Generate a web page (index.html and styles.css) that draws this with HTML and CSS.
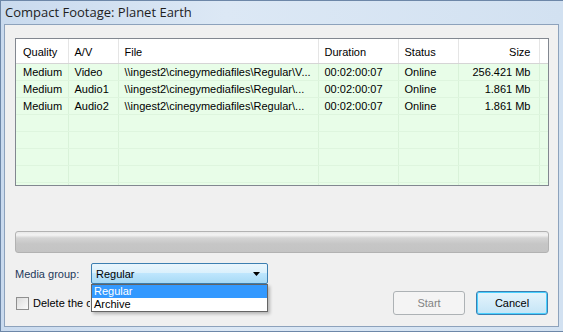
FILE: index.html
```html
<!DOCTYPE html>
<html lang="en">
<head>
  <meta charset="UTF-8">
  <title>Compact Footage: Planet Earth</title>
  <link rel="stylesheet" href="styles.css">
</head>
<body>

  <div class="window">
    <div class="titlebar">Compact Footage: Planet Earth</div>

    <div class="client">
      <div class="list">
        <table>
          <colgroup>
            <col style="width: 52px">
            <col style="width: 50px">
            <col style="width: 200px">
            <col style="width: 80px">
            <col style="width: 60px">
            <col style="width: 81px">
            <col>
          </colgroup>
          <thead>
            <tr>
              <th>Quality</th>
              <th>A/V</th>
              <th>File</th>
              <th>Duration</th>
              <th>Status</th>
              <th class="num">Size</th>
              <th class="filler"></th>
            </tr>
          </thead>
          <tbody>
            <tr>
              <td>Medium</td>
              <td>Video</td>
              <td>\\ingest2\cinegymediafiles\Regular\V...</td>
              <td>00:02:00:07</td>
              <td>Online</td>
              <td class="num">256.421 Mb</td>
              <td class="filler"></td>
            </tr>
            <tr>
              <td>Medium</td>
              <td>Audio1</td>
              <td>\\ingest2\cinegymediafiles\Regular\...</td>
              <td>00:02:00:07</td>
              <td>Online</td>
              <td class="num">1.861 Mb</td>
              <td class="filler"></td>
            </tr>
            <tr>
              <td>Medium</td>
              <td>Audio2</td>
              <td>\\ingest2\cinegymediafiles\Regular\...</td>
              <td>00:02:00:07</td>
              <td>Online</td>
              <td class="num">1.861 Mb</td>
              <td class="filler"></td>
            </tr>
            <tr><td></td><td></td><td></td><td></td><td></td><td></td><td class="filler"></td></tr>
            <tr><td></td><td></td><td></td><td></td><td></td><td></td><td class="filler"></td></tr>
            <tr><td></td><td></td><td></td><td></td><td></td><td></td><td class="filler"></td></tr>
            <tr><td></td><td></td><td></td><td></td><td></td><td></td><td class="filler"></td></tr>
            <tr class="rest"><td></td><td></td><td></td><td></td><td></td><td></td><td class="filler"></td></tr>
          </tbody>
        </table>
      </div>

      <div class="progress"></div>

      <div class="group-row">
        <label class="group-label">Media group:</label>
        <div class="combo">
          <span>Regular</span>
          <svg class="arrow" width="7" height="4" viewBox="0 0 7 4"><path d="M0 0h7L3.5 4z" fill="#000"/></svg>
          <ul class="dropdown">
            <li class="selected">Regular</li>
            <li>Archive</li>
          </ul>
        </div>
      </div>

      <div class="bottom-row">
        <label class="check"><span class="box"></span><span class="check-text">Delete the original files</span></label>
        <div class="buttons">
          <button class="btn" disabled>Start</button>
          <button class="btn default">Cancel</button>
        </div>
      </div>
    </div>
  </div>

</body>
</html>
```

FILE: styles.css
```css
body {
  margin: 0;
  font-family: 'Liberation Sans', Arial, sans-serif;
  font-size: 11px;
  color: #000;
}

.window {
  width: 563px;
  height: 332px;
  box-sizing: border-box;
  display: flex;
  flex-direction: column;
  background: linear-gradient(to right, #c9daee, #dce8f5 40%, #d2e1f1);
  border: 1px solid #6d87a8;
  border-right: none;
  padding: 0 4px 4px 3px;
}

.titlebar {
  height: 23px;
  line-height: 23px;
  padding-left: 1px;
  font-family: 'Open Sans', sans-serif;
  font-size: 13px;
  color: #1e1e1e;
}

.client {
  flex: 1;
  position: relative;
  background: #f0f0f0;
  border: 1px solid #8da2bc;
  display: flex;
  flex-direction: column;
  padding: 13px 9px 0 10px;
}

.list {
  height: 148px;
  box-sizing: border-box;
  border: 1px solid #828790;
  background: #e8fde8;
  overflow: hidden;
}

table {
  width: 100%;
  table-layout: fixed;
  border-collapse: collapse;
}

th {
  height: 23px;
  padding: 1px 6px 0;
  background: #fff;
  font-weight: normal;
  text-align: left;
  border-right: 1px solid #e5e5e5;
  border-bottom: 1px solid #d5d5d5;
  white-space: nowrap;
}

td {
  height: 16px;
  padding: 0 6px;
  border-right: 1px solid #d9f2d9;
  border-bottom: 1px solid #def5de;
  white-space: nowrap;
  overflow: hidden;
}

th:first-child,
td:first-child {
  padding-left: 7px;
}

.num {
  text-align: right;
  padding-right: 8px;
}

.filler {
  border-right: none;
}

tr.rest td {
  height: 3px;
  border-bottom: none;
}

.progress {
  margin-top: 45px;
  height: 22px;
  box-sizing: border-box;
  border: 1px solid #b2b2b2;
  border-radius: 3px;
  background: linear-gradient(#e8e8e8 0, #f3f3f3 3px, #d4d4d4 6px, #c6c6c6 12px, #c4c4c4 100%);
}

.group-row {
  margin-top: 10px;
  display: flex;
  align-items: center;
  height: 21px;
}

.group-label {
  width: 76px;
  color: #1e395b;
}

.combo {
  position: relative;
  width: 177px;
  height: 21px;
  box-sizing: border-box;
  border: 1px solid #3c7fb1;
  border-radius: 2px;
  background: linear-gradient(#eaf6fd, #d9f0fc 50%, #bee6fd 50%, #a7d9f5);
  display: flex;
  align-items: center;
  padding: 0 7px 0 4px;
}

.combo span {
  flex: 1;
}

.dropdown {
  position: absolute;
  left: -1px;
  top: 20px;
  width: 177px;
  box-sizing: border-box;
  margin: 0;
  padding: 0;
  list-style: none;
  background: #fff;
  border: 1px solid #646464;
  box-shadow: 2px 2px 3px rgba(0,0,0,0.25);
  z-index: 2;
}

.dropdown li {
  height: 13px;
  line-height: 13px;
  padding-left: 2px;
}

.dropdown li.selected {
  background: #3399ff;
  color: #fff;
}

.bottom-row {
  margin-top: 7px;
  display: flex;
  align-items: center;
  justify-content: space-between;
}

.check {
  display: flex;
  align-items: center;
  gap: 4px;
  padding-left: 1px;
  width: 74px;
  overflow: hidden;
  white-space: nowrap;
}

.check .box {
  flex: none;
  width: 11px;
  height: 11px;
  border: 1px solid #8f8f8f;
  background: linear-gradient(135deg, #dcdcdc, #fbfbfb);
}

.check-text {
  overflow: hidden;
}

.buttons {
  display: flex;
  gap: 11px;
  padding-right: 1px;
}

.btn {
  width: 72px;
  height: 24px;
  font-family: inherit;
  font-size: 11px;
  border-radius: 3px;
  border: 1px solid #707070;
  background: linear-gradient(#f2f2f2, #ebebeb 50%, #dddddd 50%, #cfcfcf);
  padding: 0;
}

.btn:disabled {
  border-color: #adb2b5;
  background: #f4f4f4;
  color: #838383;
}

.btn.default {
  border-color: #3c7fb1;
  box-shadow: inset 0 0 0 1px #48d0ff;
  background: linear-gradient(#e5f4fc, #c4e5f6);
  color: #000;
}
```
